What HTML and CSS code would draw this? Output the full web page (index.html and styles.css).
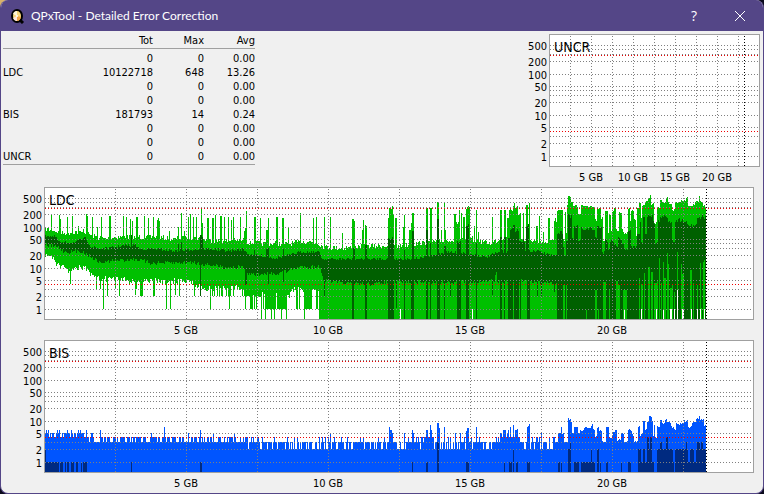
FILE: index.html
```html
<!DOCTYPE html>
<html lang="en">
<head>
  <meta charset="UTF-8">
  <title>QPxTool - Detailed Error Correction</title>
  <link rel="stylesheet" href="styles.css">
</head>
<body>
  <div class="window">
    <header class="titlebar">
      <svg class="app-icon" viewBox="0 0 16 16" aria-hidden="true">
        <path d="M10 11 L14 15" stroke="#000" stroke-width="3"/>
        <ellipse cx="8" cy="8" rx="6" ry="7" fill="#000"/>
        <ellipse cx="8" cy="8" rx="4" ry="5" fill="#f7d77c"/>
        <path d="M8 8 L4 6 Q5 3 8 3 Z" fill="#fff6d8"/>
        <path d="M8 8 L12 9 Q11 13 8 13 Z" fill="#f2a64a"/>
        <path d="M8 8 L4 10 Q5 13 8 13 Z" fill="#ffe9e0"/>
        <circle cx="8" cy="8" r="1" fill="#fff"/>
      </svg>
      <h1>QPxTool - Detailed Error Correction</h1>
      <button class="title-btn" type="button" aria-label="Help">?</button>
      <button class="title-btn" type="button" aria-label="Close">
        <svg viewBox="0 0 10 10" width="10" height="10"><path d="M0 0 L10 10 M10 0 L0 10" stroke="#fff" fill="none"/></svg>
      </button>
    </header>

    <main>
      <div class="top">
        <table class="totals">
          <thead>
            <tr><th></th><th>Tot</th><th>Max</th><th>Avg</th></tr>
          </thead>
          <tbody>
            <tr><th></th><td>0</td><td>0</td><td>0.00</td></tr>
            <tr><th>LDC</th><td>10122718</td><td>648</td><td>13.26</td></tr>
            <tr><th></th><td>0</td><td>0</td><td>0.00</td></tr>
            <tr><th></th><td>0</td><td>0</td><td>0.00</td></tr>
            <tr><th>BIS</th><td>181793</td><td>14</td><td>0.24</td></tr>
            <tr><th></th><td>0</td><td>0</td><td>0.00</td></tr>
            <tr><th></th><td>0</td><td>0</td><td>0.00</td></tr>
            <tr><th>UNCR</th><td>0</td><td>0</td><td>0.00</td></tr>
          </tbody>
        </table>
        <svg class="chart chart-small" id="uncr"></svg>
      </div>
      <div class="graphs">
        <svg class="chart" id="ldc"></svg>
        <svg class="chart" id="bis"></svg>
      </div>
    </main>
  </div>
  <script src="charts.js"></script>
</body>
</html>
```
FILE: styles.css
```css
body {
  margin: 0;
  background: linear-gradient(to right, #d9b26a 20px, #0b0a1c 20px) top / 100% 20px no-repeat #0b0a1c;
  font-family: "DejaVu Sans Condensed", Tahoma, sans-serif;
  font-size: 11px;
  color: #000;
}

.window {
  box-sizing: border-box;
  min-height: 100vh;
  border: 1px solid #544687;
  border-top: none;
  border-radius: 8px;
  background: #f0f0f0;
  overflow: hidden;
}

.titlebar {
  display: flex;
  align-items: center;
  height: 31px;
  padding-left: 8px;
  background: #544687;
  color: #fff;
}

.app-icon {
  width: 16px;
  height: 16px;
}

.titlebar h1 {
  flex: 1;
  margin: 0 0 0 6px;
  font-family: Lato, "Segoe UI", sans-serif;
  font-size: 12px;
  font-weight: normal;
}

.title-btn {
  display: flex;
  align-items: center;
  justify-content: center;
  width: 46px;
  height: 31px;
  padding: 0;
  border: none;
  background: none;
  color: #fff;
  font-family: "Open Sans", "Segoe UI", sans-serif;
  font-size: 14px;
}

.title-btn:hover {
  background: #6a5c9c;
}

.top {
  display: flex;
  justify-content: space-between;
  align-items: flex-start;
  padding: 3px 3px 0 2px;
}

.totals {
  table-layout: fixed;
  width: 252px;
  border-collapse: collapse;
  border-bottom: 1px solid #a0a0a0;
  line-height: 14px;
}

.totals th,
.totals td {
  width: 51px;
  height: 14px;
  padding: 0;
  font-weight: normal;
  text-align: right;
}

.totals th:first-child {
  width: 99px;
  text-align: left;
}

.totals thead th {
  border-bottom: 1px solid #a0a0a0;
}

.totals tbody tr:first-child > * {
  padding-top: 3px;
}

.graphs {
  padding-right: 9px;
}

.chart {
  display: block;
  width: 100%;
  height: 153px;
}

.chart-small {
  flex: 0 0 254px;
  width: 254px;
}

.chart text {
  font-size: 11px;
}

.chart .name {
  font-size: 14px;
}

.axis {
  text-anchor: end;
}

.gb {
  text-anchor: middle;
}

.frame {
  fill: #fff;
  stroke: #a0a0a0;
}

.grid,
.limit,
.end {
  fill: none;
  stroke: #808080;
  stroke-dasharray: 1 2;
  shape-rendering: crispEdges;
}

.limit {
  stroke: #f00000;
}

.end {
  stroke: #000;
}

.series {
  shape-rendering: crispEdges;
}

.ldc-max { fill: #00c000; }
.ldc-avg { fill: #006000; }
.bis-max { fill: #0055ff; }
.bis-avg { fill: #002a80; }
```
FILE: charts.js
```js
const LEFT = 43;      // room for the scale on the left
const PLOT_H = 131;   // inner height of a plot
const DECADE = 41;    // pixels per decade of the log scale
const COLS = 661;     // scanned samples
const FULL = 708;     // samples that fit on the whole disc
const DISC_GB = 24.93;

let seed = 7;
function rnd() {
  seed = (seed * 16807) % 2147483647;
  return seed / 2147483647;
}

function level(v) {
  return v > 0 ? Math.floor(121 - DECADE * Math.log10(v)) : PLOT_H;
}

// "x:y x:y ..." -> one row per sample, with some noise
function curve(points, noise) {
  const p = points.trim().split(/\s+/).map(s => s.split(":").map(Number));
  const out = [];
  let k = 0;
  for (let x = 0; x < COLS; x++) {
    while (k < p.length - 2 && x >= p[k + 1][0]) k++;
    const [x0, y0] = p[k], [x1, y1] = p[k + 1];
    const t = Math.min(1, (x - x0) / (x1 - x0));
    out.push(Math.round(y0 + (y1 - y0) * t + (rnd() - 0.5) * noise));
  }
  return out;
}

// "x,width,y ..." written over a curve
function peaks(rows, list) {
  list.trim().split(/\s+/).forEach(s => {
    const [x, w, y] = s.split(",").map(Number);
    for (let i = x; i < x + w && i < COLS; i++) {
      rows[i] = y + (w > 2 && y < 90 ? Math.round((rnd() - 0.5) * 4) : 0);
    }
  });
  return rows;
}

// "x:y ..." steps, each held until the next one
function steps(rows, list, noise) {
  const p = list.trim().split(/\s+/).map(s => s.split(":").map(Number));
  p.forEach(([x, y], i) => {
    const end = i + 1 < p.length ? p[i + 1][0] : COLS;
    for (let c = x; c < end; c++) rows[c] = Math.round(y + (rnd() - 0.5) * noise);
  });
  return rows;
}

// LDC, maximum
const ldcTop = curve(`0:41 8:42 15:45 30:44 42:45 50:49 60:51 70:49 110:49 130:51 145:49 165:53
  185:53 198:52 203:55 245:56 258:53 273:55 278:59 295:60 325:58 355:58 375:55 388:54 402:52
  422:52 435:53 445:55 458:50 468:49 478:51 502:55 515:50 661:50`, 5);
peaks(ldcTop, `6,1,27 14,1,27 15,1,31 22,1,29 27,1,28 33,1,38 38,1,41 41,1,26 42,1,28 47,1,29 52,1,39
  56,1,29 64,2,28 78,1,28 81,1,29 85,1,31 87,1,33 91,2,29 99,1,28 103,1,30 108,1,29 112,3,31
  124,1,43 133,1,39 136,1,25 139,1,43 143,1,29 145,1,26 148,1,29 151,1,29 156,1,19 157,1,35 162,2,30
  167,2,30 170,1,27 175,2,28 179,1,29 183,1,29 186,1,32 188,1,29 195,1,29 199,1,43 200,1,40 201,1,23
  209,2,29 215,1,30 221,3,43 223,1,30 231,2,29 237,2,30 243,1,40 255,1,25 268,1,30 271,1,29
  279,1,29 285,1,29 297,1,45 307,3,31 317,2,42 318,1,32 320,1,37 321,1,38 343,1,30 344,5,20
  348,1,26 350,2,30 358,1,39 359,1,27 364,2,42 366,1,35 367,2,25 381,2,20 385,2,20 392,2,14
  396,1,42 399,1,15 400,1,42 409,2,26 411,3,35 414,1,22 416,1,25 418,2,29 421,4,19 427,1,48 429,1,38
  431,1,22 433,1,44 447,1,29 455,2,22 459,2,22 462,2,30 464,4,22 468,1,18 469,1,15 470,3,20
  473,3,26 478,1,25 481,2,17 484,1,15 491,2,38 494,1,28 498,1,44 503,2,30 509,3,32 512,1,23`);
steps(ldcTop, `513:21 518:52 520:24 521:46 522:18 523:9 526:15 528:18 533:25 536:18 550:32
  552:20 556:30 558:53 560:22 563:45 564:28 566:42 567:24 569:20 571:42 574:24 577:40 578:45
  583:21 585:34 586:23 589:32 591:48 592:19 594:15 596:30 597:18 600:14 603:11 605:6 606:16
  609:35 612:20 615:13 617:15 621:10 623:15 627:22 630:15 636:13 641:10 643:17 650:14 654:7
  655:13 658:17 660:20`, 3);

// LDC, average band
const ldcAvgTop = curve(`0:47 10:49 15:55 30:54 40:50 46:59 55:61 65:60 75:58 90:57 95:61 110:61
  130:63 150:61 165:61 185:63 198:61 203:66 230:70 245:67 256:64 274:64 277:71 340:71 365:71
  385:69 400:64 420:65 440:69 455:64 490:63 510:68 661:60`, 3);
peaks(ldcAvgTop, `86,1,47 133,1,56 136,1,54 155,3,48 209,1,62 221,3,61 238,1,61 308,2,60 320,2,57
  343,6,51 359,1,62 367,2,43 381,2,42 385,1,55 392,2,31 399,2,58 412,4,55 421,3,37 431,1,55
  455,2,49 459,2,49 463,2,50 465,3,41 468,2,37 470,4,42 474,6,53 481,3,37 492,2,62`);
steps(ldcAvgTop, `512:44 518:60 519:66 521:52 523:28 527:52 529:39 533:53 536:41 550:50 552:39
  557:64 560:52 563:60 565:53 569:57 573:50 577:57 579:61 583:42 586:59 592:45 595:33 596:55
  598:30 600:45 602:27 608:35 610:55 613:33 615:29 623:33 627:53 630:32 642:37 652:29`, 4);

const ldcAvgEnd = curve(`0:57 12:59 20:64 35:63 45:68 55:75 65:73 90:71 105:75 130:75 145:74
  165:77 180:79 199:79 201:85 215:87 235:85 255:79 275:79 278:92 295:95 330:96 340:94 400:94
  450:93 470:93 510:95 661:95`, 4);
peaks(ldcAvgEnd, `155,1,108 200,2,97 223,1,96 238,1,94 279,1,108 307,2,131 320,2,131 343,6,131
  351,1,120 359,1,131 366,3,131 381,2,131 385,1,131 392,3,131 399,1,131 405,1,108 412,4,131
  421,3,131 431,1,131 447,1,107 450,1,87 451,1,84 455,2,131 459,1,131 463,5,131 469,5,131
  475,1,131 482,3,131 492,1,108 496,1,108 509,1,104 512,6,131`);
steps(ldcAvgEnd, `518:97 520:131 521:97 522:131`, 0);
peaks(ldcAvgEnd, `541,1,122 550,2,102 553,1,121 558,3,94 564,1,102 571,2,93 573,2,97 578,4,102
  594,1,90 596,2,96 599,1,85 603,2,79 606,2,84 609,3,95 612,1,92 614,1,70 616,1,95 618,1,74
  619,2,90 622,1,65 623,1,76 625,2,100 627,1,96 629,1,104 632,1,64 636,1,76 637,2,86 645,2,82
  648,1,95 652,1,97 655,1,75 656,1,120 658,1,74 659,1,72`);

// LDC, minimum
const ldcEnd = curve(`0:67 8:69 12:77 20:81 25:84 35:79 42:82 48:90 60:91 80:92 110:93 145:93
  150:97 165:101 199:100 200:106 244:108 246:101 273:102 274:131 661:131`, 6);
for (let x = 165; x < 274; x++) {
  const r = rnd();
  if (x < 200 ? r > 0.6 : r > 0.45) ldcEnd[x] = x >= 200 && r > 0.6 ? 121 : 108;
}
for (let x = 274; x < COLS; x++) ldcEnd[x] = PLOT_H;
peaks(ldcEnd, `25,1,96 51,1,101 55,1,101 58,1,121 62,1,108 70,1,101 74,1,108 84,1,97 90,2,107
  91,1,101 95,3,108 108,2,108 121,1,121 125,1,121 130,1,107 134,1,108 149,1,108 155,1,108
  165,1,121 184,1,121 201,4,108 216,1,131 220,1,131 222,9,121 226,1,131 232,10,121 229,1,131
  236,1,131 241,1,131 259,1,131 355,1,121 427,1,121 579,1,121 596,1,121 598,1,121 611,1,121
  618,1,121 621,1,121 625,2,121 629,1,121 632,1,102 637,2,121 646,1,121 652,1,121 655,1,121 659,1,121`);

// BIS, maximum
const bisTop = [];
for (let x = 0; x < COLS; x++) {
  const r = rnd();
  let v;
  if (x < 43) v = r > 0.9 ? 6 : r > 0.35 ? 5 : 4;
  else if (x < 145) v = r > 0.45 ? 4 : 3;
  else if (x < 215) v = r > 0.6 ? 4 : 3;
  else if (x < 375) v = r > 0.88 ? 4 : r > 0.3 ? 3 : 2;
  else if (x < 455) v = r > 0.7 ? 4 : r > 0.25 ? 3 : 2;
  else if (x < 475) v = r > 0.5 ? 6 : 4;
  else v = r > 0.8 ? 4 : r > 0.35 ? 3 : 2;
  bisTop.push(level(v));
}
peaks(bisTop, `46,2,92 55,1,89 106,1,92 119,1,86 143,1,92 155,1,89 168,1,92 189,1,92 203,1,108
  285,1,92 344,1,86 345,2,89 347,1,92 359,1,92 367,1,89 368,1,92 381,2,89 385,1,84 386,1,89
  392,2,82 394,1,87 399,1,86 410,1,92 415,1,92 421,3,89 431,1,86 455,2,92 459,1,89 462,1,92
  465,1,86 468,1,84 470,3,89 482,3,84 496,1,92`);
steps(bisTop, `513:92 516:86 517:92 519:101 523:78 526:81 527:92 529:86 533:92 535:89 539:86
  547:82 548:89 550:95 552:86 554:89 557:101 561:86 564:96 568:92 570:89 572:99 576:92 579:101
  583:89 587:94 589:101 593:86 595:94 598:80 600:89 602:81 604:75 607:79 608:96 609:84 610:96
  612:86 615:79 617:83 620:78 622:81 626:86 629:89 631:83 639:80 643:86 647:81 651:78 654:74
  655:79 659:84`, 2);

const bisAvg = new Array(COLS).fill(PLOT_H);
peaks(bisAvg, `0,14,121 0,1,108 15,3,121 20,1,121 22,2,121 26,3,121 31,2,121 36,1,121 38,4,121
  86,1,121 155,2,121 367,1,121 381,2,121 392,2,101 421,3,121 459,1,121 464,3,121 468,1,108
  471,2,121 482,3,121 513,2,121 516,1,121 523,3,108 525,1,101 529,5,121 536,14,121 546,1,108
  552,2,108 555,1,121 561,2,121 576,1,121 583,3,121 593,3,108 596,13,121 598,2,108 602,2,96
  604,3,108 605,2,96 612,16,108 615,2,101 621,2,96 628,1,121 630,13,108 641,1,101 643,2,121
  645,4,108 649,2,121 651,10,108 652,3,101 656,2,101`);

const NS = "http://www.w3.org/2000/svg";

function add(svg, tag, cls, attrs, text) {
  const el = document.createElementNS(NS, tag);
  el.setAttribute("class", cls);
  for (const k in attrs) el.setAttribute(k, attrs[k]);
  if (text) el.textContent = text;
  svg.appendChild(el);
}

function bars(svg, cls, top, end, w) {
  let d = "";
  for (let i = 0; i < COLS; i++) {
    const a = Math.round(i * w / FULL), b = Math.round((i + 1) * w / FULL);
    const bottom = end ? end[i] : PLOT_H;
    if (bottom > top[i]) d += `M${LEFT + 1 + a} ${1 + top[i]}h${b - a}V${1 + bottom}h${a - b}z`;
  }
  add(svg, "path", "series " + cls, { d });
}

function draw(id, name, series) {
  const svg = document.getElementById(id);
  svg.textContent = "";
  const w = Math.round(svg.getBoundingClientRect().width) - LEFT - 2;
  const x0 = LEFT + 1;
  add(svg, "rect", "frame", { x: LEFT + 0.5, y: 0.5, width: w + 1, height: PLOT_H + 1 });

  series.forEach(s => bars(svg, s[0], s[1], s[2], w));

  const hline = (cls, y) => add(svg, "path", cls, { d: `M${x0} ${y + 1.5}h${w}` });
  const vline = (cls, x) => add(svg, "path", cls, { d: `M${x0 + x + 0.5} 2v${PLOT_H - 1}` });

  [1, 2, 3, 4, 5, 10, 20, 30, 40, 50, 100, 200, 300, 400, 500].forEach(v => hline("grid", level(v)));
  const perGb = w / DISC_GB;
  for (let gb = 2.5; gb < 24; gb += 2.5) vline("grid", Math.round(gb * perGb) - 1);
  hline("limit", level(4));
  hline("limit", level(280));
  vline("end", Math.round(23.3 * perGb) - 1);

  [1, 2, 5, 10, 20, 50, 100, 200, 500].forEach(v =>
    add(svg, "text", "axis", { x: LEFT - 2, y: level(v) + 6 }, String(v)));
  for (let gb = 5; gb <= 20; gb += 5) {
    add(svg, "text", "gb", { x: x0 + Math.round(gb * perGb) - 1, y: 147 }, gb + " GB");
  }
  add(svg, "text", "name", { x: x0 + 4, y: 18 }, name);
}

function drawAll() {
  draw("uncr", "UNCR", []);
  draw("ldc", "LDC", [["ldc-max", ldcTop, ldcEnd], ["ldc-avg", ldcAvgTop, ldcAvgEnd]]);
  draw("bis", "BIS", [["bis-max", bisTop], ["bis-avg", bisAvg]]);
}

drawAll();
window.addEventListener("resize", drawAll);
```
